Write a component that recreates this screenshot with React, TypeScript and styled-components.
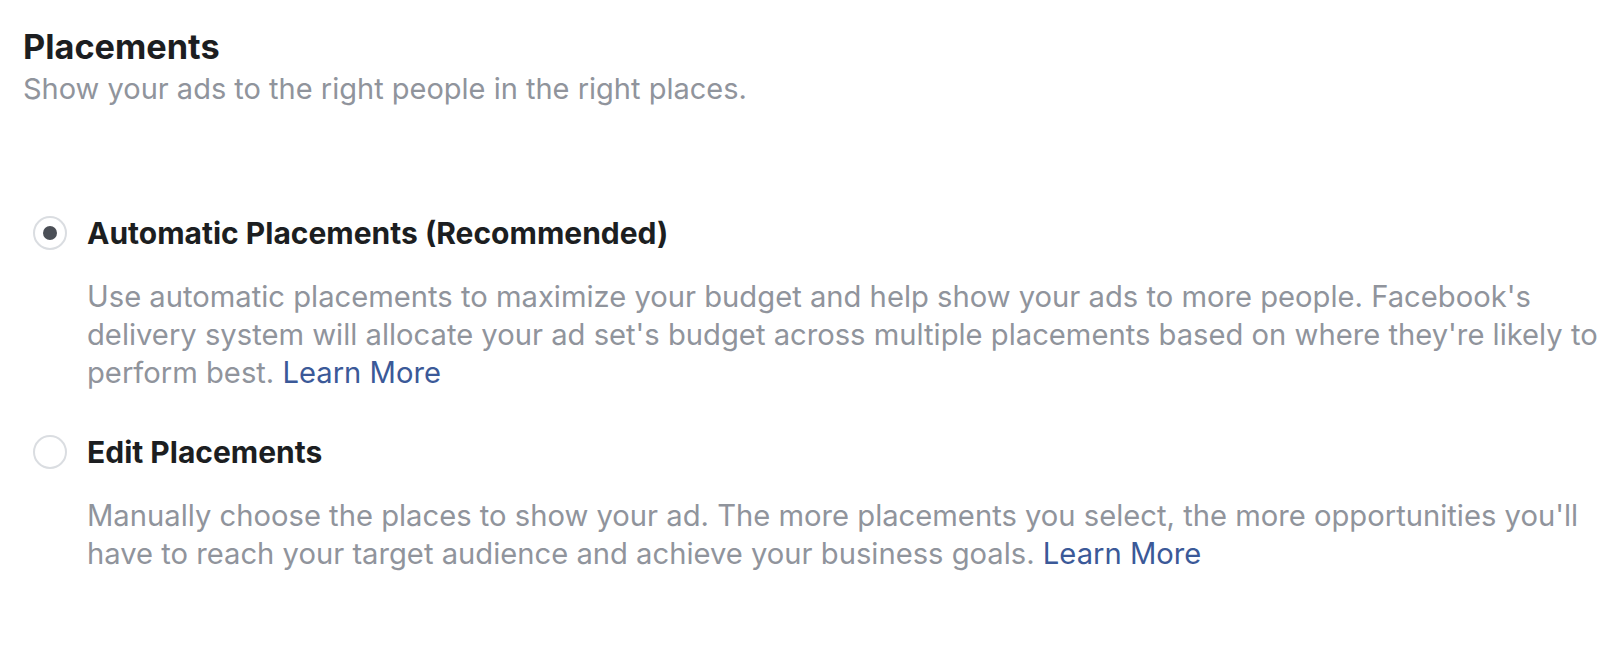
import React from "react";
import styled, { createGlobalStyle } from "styled-components";

const GlobalStyle = createGlobalStyle`
  html, body {
    margin: 0;
    padding: 0;
    background: #ffffff;
  }
  body {
    font-family: Inter, "Noto Sans", "Liberation Sans", sans-serif;
    -webkit-font-smoothing: antialiased;
  }
`;

const Page = styled.section`
  box-sizing: border-box;
  width: 1618px;
  height: 672px;
  padding: 27px 4px 0 23px;
  display: flex;
  flex-direction: column;
`;

const Title = styled.h2`
  margin: 0;
  font-size: 34.3px;
  line-height: 40px;
  font-weight: 700;
  color: #1c1e21;
`;

const Subtitle = styled.p`
  margin: 3px 0 0;
  font-size: 29px;
  line-height: 38px;
  font-weight: 400;
  color: #90949c;
`;

const Options = styled.div`
  display: flex;
  flex-direction: column;
  gap: 40px;
  margin-top: 106px;
`;

const Option = styled.div`
  display: grid;
  grid-template-columns: 34px 1fr;
  column-gap: 20px;
  align-items: center;
  padding-left: 10px;
`;

const Radio = styled.span<{ $checked?: boolean }>`
  box-sizing: border-box;
  width: 34px;
  height: 34px;
  border-radius: 50%;
  border: 2px solid #dadde1;
  background: #ffffff;
  display: flex;
  align-items: center;
  justify-content: center;

  &::after {
    content: "";
    width: 14px;
    height: 14px;
    border-radius: 50%;
    background: ${(p) => (p.$checked ? "#4b4f56" : "transparent")};
  }
`;

const Label = styled.span`
  font-size: 30px;
  line-height: 38px;
  font-weight: 700;
  color: #1c1e21;
`;

const Description = styled.p`
  grid-column: 2;
  margin: 26px 0 0;
  font-size: 29.2px;
  line-height: 38.2px;
  font-weight: 400;
  color: #90949c;
`;

const Link = styled.a`
  color: #3b5998;
  text-decoration: none;
  cursor: pointer;
`;

export default function App() {
  return (
    <>
      <GlobalStyle />
      <Page>
        <Title>Placements</Title>
        <Subtitle>Show your ads to the right people in the right places.</Subtitle>
        <Options>
          <Option>
            <Radio $checked />
            <Label>Automatic Placements (Recommended)</Label>
            <Description>
              Use automatic placements to maximize your budget and help show your ads to more
              people. Facebook's delivery system will allocate your ad set's budget across multiple
              placements based on where they're likely to perform best. <Link>Learn More</Link>
            </Description>
          </Option>
          <Option>
            <Radio />
            <Label>Edit Placements</Label>
            <Description>
              Manually choose the places to show your ad. The more placements you select, the more
              opportunities you'll have to reach your target audience and achieve your business
              goals. <Link>Learn More</Link>
            </Description>
          </Option>
        </Options>
      </Page>
    </>
  );
}
